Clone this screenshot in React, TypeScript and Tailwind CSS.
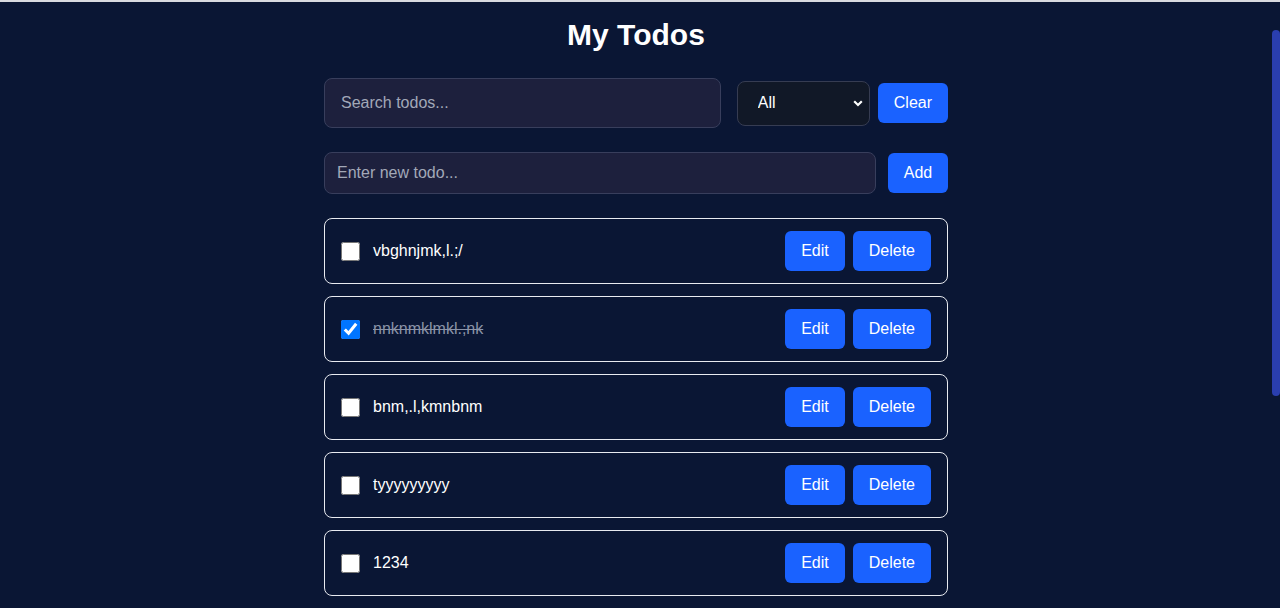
import React from "react";

const todos = [
  { text: "vbghnjmk,l.;/", done: false },
  { text: "nnknmklmkl.;nk", done: true },
  { text: "bnm,.l,kmnbnm", done: false },
  { text: "tyyyyyyyyy", done: false },
  { text: "1234", done: false },
];

export default function App() {
  return (
    <div
      className="h-[608px] w-[1280px] overflow-hidden bg-[#0a1634] flex flex-col"
      style={{ fontFamily: '"Liberation Sans", Arial, sans-serif' }}
    >
      <div className="h-[2px] bg-[#d9dbe0] shrink-0" />
      <div className="flex flex-1 min-h-0">
        <main className="flex-1 flex flex-col items-center">
          <h1 className="text-[30px] leading-[36px] font-bold text-white mt-[15px]">My Todos</h1>
          <div className="w-[624px] mt-[25px]">
            <div className="flex items-center">
              <input
                className="w-[397px] h-[50px] rounded-lg bg-[#1d203d] border border-[#383e5c] px-4 text-base text-white placeholder:text-[#a2a8b8] outline-none"
                placeholder="Search todos..."
              />
              <div className="relative ml-[16px]">
                <select className="appearance-none w-[133px] h-[45px] rounded-lg bg-[#111827] border border-[#363c52] pl-5 text-base text-white outline-none">
                  <option>All</option>
                </select>
                <svg
                  className="absolute right-[7px] top-[19px] pointer-events-none"
                  width="10"
                  height="7"
                  viewBox="0 0 10 7"
                >
                  <path d="M1.2 1.3 L5 5 L8.8 1.3" stroke="white" strokeWidth="2.2" fill="none" />
                </svg>
              </div>
              <button className="ml-[8px] h-[40px] px-4 rounded-md bg-[#1a62ff] text-white text-base">
                Clear
              </button>
            </div>
            <div className="flex items-center mt-[24px]">
              <input
                className="w-[552px] h-[42px] rounded-lg bg-[#1d203d] border border-[#383e5c] px-3 text-base text-white placeholder:text-[#a2a8b8] outline-none"
                placeholder="Enter new todo..."
              />
              <button className="ml-auto h-[40px] w-[60px] rounded-md bg-[#1a62ff] text-white text-base">
                Add
              </button>
            </div>
            <div className="flex flex-col gap-[12px] mt-[24px]">
              {todos.map((t, i) => (
                <div
                  key={i}
                  className="flex items-center h-[66px] border border-[#e8eaf0] rounded-lg px-4"
                >
                  <input
                    type="checkbox"
                    defaultChecked={t.done}
                    className="w-[19px] h-[19px] m-0 accent-[#0075ff]"
                  />
                  <span
                    className={
                      t.done
                        ? "ml-[13px] text-base text-[#8b93a7] line-through"
                        : "ml-[13px] text-base text-white"
                    }
                  >
                    {t.text}
                  </span>
                  <div className="ml-auto flex gap-2">
                    <button className="h-[40px] px-4 rounded-md bg-[#1a62ff] text-white text-base">
                      Edit
                    </button>
                    <button className="h-[40px] px-4 rounded-md bg-[#1a62ff] text-white text-base">
                      Delete
                    </button>
                  </div>
                </div>
              ))}
            </div>
          </div>
        </main>
        <aside className="w-[8px] shrink-0 pt-[28px]">
          <div className="h-[366px] w-[8px] rounded-full bg-[#2a3eae]" />
        </aside>
      </div>
    </div>
  );
}
